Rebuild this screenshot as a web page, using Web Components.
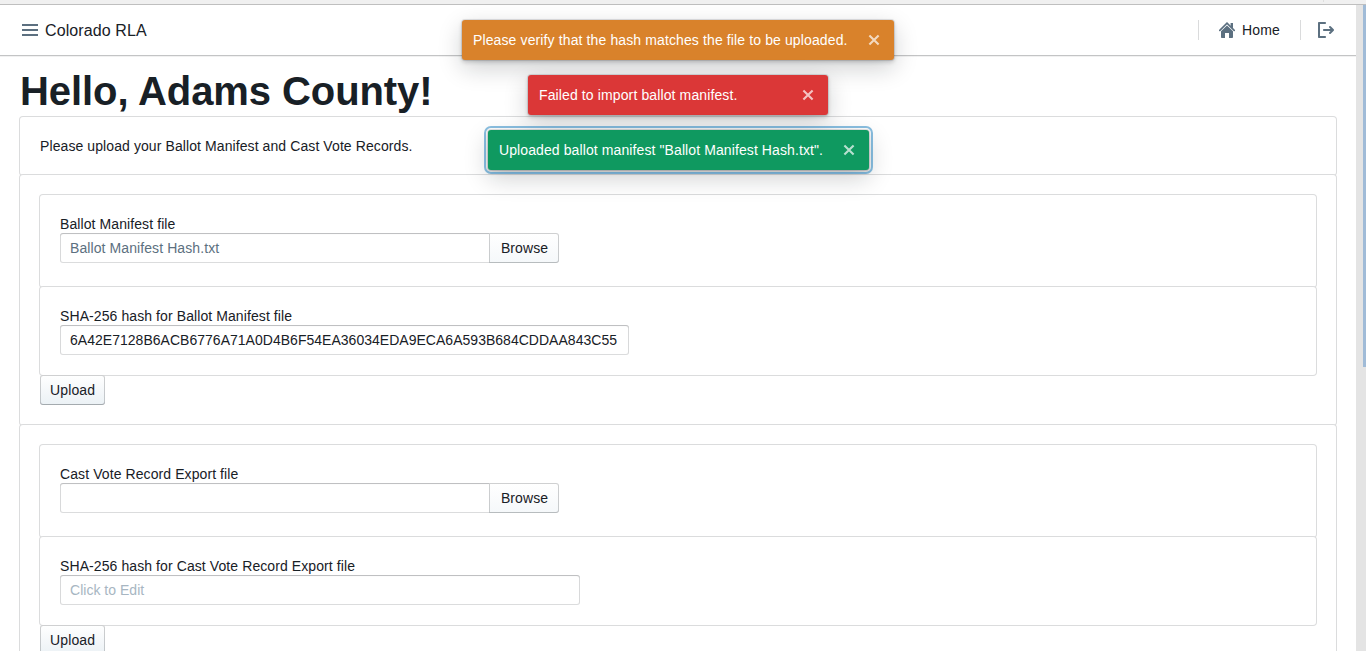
<!DOCTYPE html>
<html lang="en">
<head>
<meta charset="utf-8">
<title>Colorado RLA</title>
<style>
html, body { margin: 0; height: 100%; overflow: hidden; }
body { font: 14px/18px "Liberation Sans", Arial, sans-serif; color: #182026; background: #fff; letter-spacing: .09px; }
</style>
</head>
<body>
<rla-app></rla-app>
<script>
function define(name, html) {
  const t = document.createElement('template');
  t.innerHTML = html;
  customElements.define(name, class extends HTMLElement {
    constructor() {
      super();
      this.attachShadow({ mode: 'open' }).append(t.content.cloneNode(true));
    }
  });
}

const ICONS = {
  menu: '<path d="M0 2h16v2H0zM0 7h16v2H0zM0 12h16v2H0z"/>',
  home: '<path d="M2 9.3V15c0 .55.45 1 1 1h3v-5h4v5h3c.55 0 1-.45 1-1V9.3L8 3.6z"/><path d="M.8 8.3L8 1.2l7.2 7.1" fill="none" stroke="currentColor" stroke-width="1.7" stroke-linecap="round"/><path d="M11.6 1h2.4v5.4l-2.4-2.2z"/>',
  logout: '<path d="M7 14H2V2h5c.55 0 1-.45 1-1s-.45-1-1-1H1C.45 0 0 .45 0 1v14c0 .55.45 1 1 1h6c.55 0 1-.45 1-1s-.45-1-1-1zm8.71-6.71l-3-3a1.003 1.003 0 00-1.42 1.42L12.59 7H6c-.55 0-1 .45-1 1s.45 1 1 1h6.59l-1.29 1.29c-.19.18-.3.43-.3.71a1.003 1.003 0 001.71.71l3-3c.18-.18.29-.43.29-.71 0-.28-.11-.53-.29-.71z"/>',
  cross: '<path d="M3.4 3.4l9.2 9.2M12.6 3.4l-9.2 9.2" fill="none" stroke="currentColor" stroke-width="2.1"/>'
};
customElements.define('rla-icon', class extends HTMLElement {
  connectedCallback() {
    if (this.shadowRoot) return;
    this.attachShadow({ mode: 'open' }).innerHTML =
      '<style>:host{display:block;flex:none;width:16px;height:16px}svg{display:block}</style>' +
      '<svg width="16" height="16" viewBox="0 0 16 16" fill="currentColor">' + ICONS[this.getAttribute('name')] + '</svg>';
  }
});

define('rla-navbar', `<style>
  :host { display: flex; box-sizing: border-box; height: 50px; padding: 0 22px; align-items: center; justify-content: space-between; background: #fff; box-shadow: 0 1px 0 #c3c4c5, 0 2px 0 #f1f1f1; font-size: 14px; }
  .group { display: flex; align-items: center; }
  rla-icon { color: #5c7080; }
  .brand { margin-left: 7px; padding-top: 1px; font-size: 16px; line-height: 21px; letter-spacing: .11px; }
  .divider { width: 1px; height: 20px; background: #dadbdc; }
  .home { width: 38px; margin: 0 20px 0 7px; letter-spacing: .18px; }
  .d1 { margin-right: 20px; }
  .d2 { margin-right: 17px; }
</style>
<div class="group"><rla-icon name="menu"></rla-icon><span class="brand">Colorado RLA</span></div>
<div class="group"><span class="divider d1"></span><rla-icon name="home"></rla-icon><span class="home">Home</span><span class="divider d2"></span><rla-icon name="logout"></rla-icon></div>`);

define('rla-card', `<style>
  :host { display: block; padding: 20px; border-radius: 3px; background: #fff; box-shadow: 0 0 0 1px #dbdcdd; }
</style><slot></slot>`);

define('rla-button', `<style>
  :host { display: block; width: 65px; box-sizing: border-box; height: 30px; padding: 0 10px; line-height: 30px; border-radius: 3px; background: linear-gradient(#fff, #ebf1f5); box-shadow: inset 0 0 0 1px rgba(16,22,26,.2), inset 0 -1px 0 rgba(16,22,26,.15); letter-spacing: .13px; }
</style><slot></slot>`);

define('rla-input', `<style>
  :host { display: block; box-sizing: border-box; width: 520px; height: 30px; padding: 0 10px; line-height: 30px; border-radius: 3px; background: #fff; box-shadow: inset 0 0 0 1px rgba(16,22,26,.15), inset 0 1px 1px rgba(16,22,26,.15); white-space: nowrap; }
  :host([wide]) { width: 569px; letter-spacing: .022px; }
  :host([placeholder]) { color: #a7b6c2; letter-spacing: .02px; }
</style><slot></slot>`);

define('rla-file', `<style>
  :host { display: flex; width: 499px; height: 30px; margin-bottom: 4px; line-height: 30px; }
  .name { flex: 1; margin-right: -1px; padding-left: 10px; border-radius: 3px 0 0 3px; color: #5c7080; box-shadow: inset 0 0 0 1px rgba(16,22,26,.15), inset 0 1px 1px rgba(16,22,26,.15); }
  .browse { position: relative; box-sizing: border-box; width: 70px; padding-left: 1px; text-align: center; border-radius: 0 3px 3px 0; background: linear-gradient(#fff, #f5f8fa); box-shadow: inset 0 0 0 1px rgba(16,22,26,.2), inset 0 -1px 0 rgba(16,22,26,.08); }
</style><div class="name"><slot></slot></div><div class="browse">Browse</div>`);

define('rla-upload', `<style>
  :host { display: block; }
</style>
<rla-card>
  <rla-card><slot name="file-label"></slot><rla-file><slot name="file"></slot></rla-file></rla-card>
  <rla-card><slot name="hash-label"></slot><slot name="hash"></slot></rla-card>
  <rla-button>Upload</rla-button>
</rla-card>`);

define('rla-toast', `<style>
  :host { display: flex; box-sizing: border-box; min-width: 300px; height: 40px; padding: 0 12px 0 11px; align-items: center; justify-content: space-between; border-radius: 3px; color: #fff; white-space: nowrap; letter-spacing: .12px; box-shadow: 0 0 0 1px rgba(16,22,26,.1), 0 2px 4px rgba(16,22,26,.2), 0 8px 24px rgba(16,22,26,.2); }
  :host([intent=warning]) { width: 432px; background: #d9822b; }
  :host([intent=danger]) { background: #db3737; }
  :host([intent=success]) { width: 381px; margin-left: 1px; letter-spacing: .1px; background: #0f9960; outline: 2px solid rgba(19,124,189,.5); outline-offset: 2px; }
  rla-icon { margin-left: 18px; opacity: .7; }
</style><span><slot></slot></span><rla-icon name="cross"></rla-icon>`);

define('rla-toaster', `<style>
  :host { position: absolute; top: 20px; left: 0; width: 1356px; display: flex; flex-direction: column; align-items: center; gap: 15px; z-index: 5; }
</style><slot></slot>`);

define('rla-scrollbar', `<style>
  :host { display: block; width: 10px; background: #e4e4e4; }
  div { width: 3px; height: 362px; margin-left: 7px; background: #a0bbd7; }
</style><div></div>`);

define('rla-app', `<style>
  :host { display: grid; grid-template: 5px 646px / 1fr 10px; height: 651px; overflow: hidden; position: relative; }
  .strip { grid-column: 1 / 3; box-sizing: border-box; display: flex; justify-content: flex-end; padding-right: 42px; background: #f0f0f0; border-bottom: 1px solid #bfbfbf; }
  .tick { width: 1px; height: 2px; background: #dedede; }
  main { overflow: hidden; }
  .content { padding: 11px 20px 0; }
  h1 { margin: 0; font-size: 40px; line-height: 51px; letter-spacing: -.08px; font-weight: 700; }
</style>
<div class="strip"><div class="tick"></div></div>
<main>
  <rla-navbar></rla-navbar>
  <div class="content">
    <h1>Hello, Adams County!</h1>
    <rla-card>Please upload your Ballot Manifest and Cast Vote Records.</rla-card>
    <rla-upload>
      <div slot="file-label">Ballot Manifest file</div>
      <span slot="file">Ballot Manifest Hash.txt</span>
      <div slot="hash-label">SHA-256 hash for Ballot Manifest file</div>
      <rla-input slot="hash" wide>6A42E7128B6ACB6776A71A0D4B6F54EA36034EDA9ECA6A593B684CDDAA843C55</rla-input>
    </rla-upload>
    <rla-upload>
      <div slot="file-label">Cast Vote Record Export file</div>
      <div slot="hash-label">SHA-256 hash for Cast Vote Record Export file</div>
      <rla-input slot="hash" placeholder>Click to Edit</rla-input>
    </rla-upload>
  </div>
</main>
<rla-scrollbar></rla-scrollbar>
<rla-toaster>
  <rla-toast intent="warning">Please verify that the hash matches the file to be uploaded.</rla-toast>
  <rla-toast intent="danger">Failed to import ballot manifest.</rla-toast>
  <rla-toast intent="success">Uploaded ballot manifest "Ballot Manifest Hash.txt".</rla-toast>
</rla-toaster>`);
</script>
</body>
</html>
